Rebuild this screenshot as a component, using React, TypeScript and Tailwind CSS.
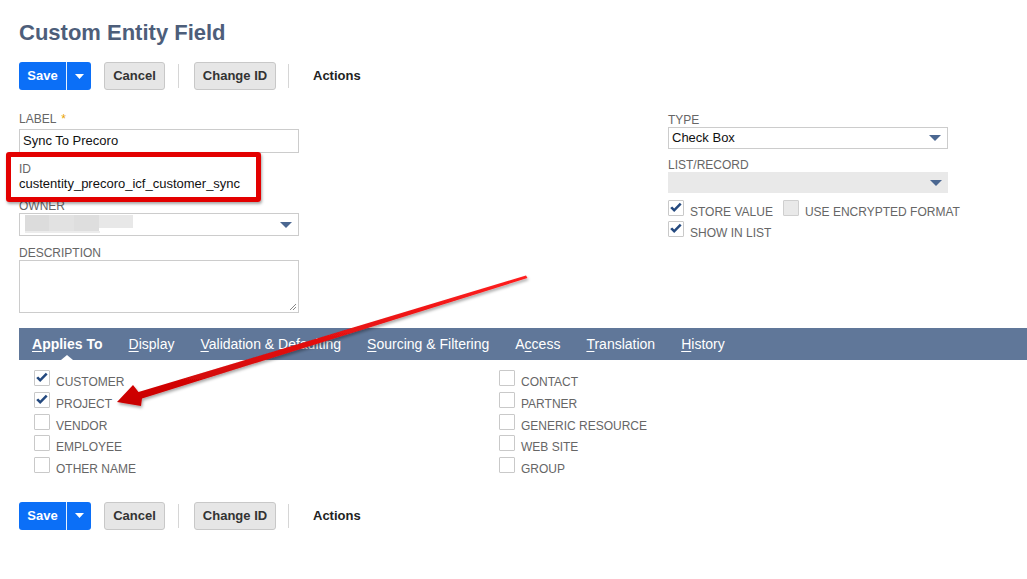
import React from "react";

const FONT = { fontFamily: '"Liberation Sans", Arial, sans-serif' };

function Caret() {
  return (
    <svg width="12" height="7" viewBox="0 0 12 7" className="absolute right-[6px] top-1/2 -translate-y-1/2">
      <path d="M0 0.5 L12 0.5 L6 6.5 Z" fill="#4b6791" />
    </svg>
  );
}

function Box({ checked, disabled }: { checked?: boolean; disabled?: boolean }) {
  return (
    <div
      className={
        "relative w-[16px] h-[16px] shrink-0 border rounded-[1px] " +
        (disabled ? "border-[#cfcfcf] bg-[#e9e9e9]" : "border-[#c9c9c9] bg-white")
      }
    >
      {checked && (
        <svg viewBox="0 0 16 16" className="absolute left-[-1px] top-[-1px] w-[16px] h-[16px]">
          <path d="M2.2 8 L4.2 6.4 L6.2 8.6 L11.8 2.8 L13.6 4.5 L6.2 12 Z" fill="#24497f" />
        </svg>
      )}
    </div>
  );
}

function CheckRow({ label, checked, h = "h-[21.75px]" }: { label: string; checked?: boolean; h?: string }) {
  return (
    <div className={"flex items-start " + h}>
      <Box checked={checked} />
      <span className="ml-[6px] mt-[5px] text-[12px] leading-[14px] text-[#666]">{label}</span>
    </div>
  );
}

function Buttons() {
  return (
    <div className="flex items-center h-[28px] ml-[19px]">
      <div className="flex h-[28px] rounded-[3px] bg-[#0b6ff7] overflow-hidden">
        <div className="w-[47px] flex items-center justify-center text-white font-bold text-[13px]">Save</div>
        <div className="w-[1px] bg-white/90" />
        <div className="w-[24px] flex items-center justify-center">
          <svg width="9" height="5" viewBox="0 0 9 5">
            <path d="M0 0 L9 0 L4.5 5 Z" fill="#fff" />
          </svg>
        </div>
      </div>
      <div className="ml-[13px] w-[61px] h-[28px] flex items-center justify-center rounded-[3px] border border-[#c8c8c8] bg-[#e6e6e6] text-[13px] font-bold text-[#333]">
        Cancel
      </div>
      <div className="ml-[13px] w-[1px] h-[24px] bg-[#d6d6d6]" />
      <div className="ml-[15px] w-[82px] h-[28px] flex items-center justify-center rounded-[3px] border border-[#c8c8c8] bg-[#e6e6e6] text-[13px] font-bold text-[#333]">
        Change ID
      </div>
      <div className="ml-[12px] w-[1px] h-[24px] bg-[#d6d6d6]" />
      <div className="ml-[24px] text-[13px] font-bold text-[#222]">Actions</div>
    </div>
  );
}

function Tab({ first, rest, pre = "", bold, active }: { first: string; rest: string; pre?: string; bold?: boolean; active?: boolean }) {
  return (
    <div className={"relative px-[13px] h-[32px] leading-[32px] text-[14px] text-white " + (bold ? "font-bold" : "")}>
      {pre}
      <span className="underline underline-offset-2">{first}</span>
      {rest}
      {active && (
        <div className="absolute left-1/2 -translate-x-1/2 bottom-0 w-0 h-0 border-l-[6px] border-r-[6px] border-b-[5px] border-l-transparent border-r-transparent border-b-white" />
      )}
    </div>
  );
}

export default function App() {
  return (
    <div className="relative w-[1027px] h-[579px] overflow-hidden bg-white" style={FONT}>
      <div className="pt-[20px] pl-[19px]">
        <h1 className="text-[22px] leading-[26px] font-bold text-[#4d5e7a]">Custom Entity Field</h1>
      </div>
      <div className="mt-[16px]">
        <Buttons />
      </div>

      {/* form */}
      <div className="mt-[22px] ml-[19px] flex">
        <div className="w-[649px]">
          <div className="w-[280px]">
            <div className="text-[12px] leading-[14px] text-[#666] h-[14px]">
              LABEL <span className="ml-[2px] text-[#e8a300]">*</span>
            </div>
            <div className="mt-[3px] h-[24px] border border-[#cccccc] flex items-center px-[3px] text-[13px] text-[#111]">
              Sync To Precoro
            </div>
            <div className="mt-[9px] text-[12px] leading-[14px] text-[#666]">ID</div>
            <div className="text-[13px] leading-[16px] text-[#111]">custentity_precoro_icf_customer_sync</div>
            <div className="mt-[7px] text-[12px] leading-[14px] text-[#666]">OWNER</div>
            <div className="relative h-[23px] border border-[#cccccc]">
              <div className="absolute left-[5px] top-[1px] flex">
                <div className="w-[24px] h-[17px] bg-[#dcdcdc]" />
                <div className="w-[25px] h-[17px] bg-[#e2e2e2]" />
                <div className="w-[25px] h-[17px] bg-[#dedede]" />
                <div className="w-[34px] h-[13px] bg-[#e8e8e8]" />
              </div>
              <div className="absolute left-[5px] top-[17px] w-[75px] h-[2px] bg-[#ececec]" />
              <Caret />
            </div>
            <div className="mt-[10px] text-[12px] leading-[14px] text-[#666]">DESCRIPTION</div>
            <div className="relative h-[53px] border border-[#cccccc]">
              <svg width="8" height="8" viewBox="0 0 8 8" className="absolute right-[1px] bottom-[1px]">
                <path d="M7 1 L1 7 M7 4 L4 7" stroke="#888" strokeWidth="1" />
              </svg>
            </div>
          </div>
        </div>
        <div className="w-[280px] pt-[2px]">
          <div className="text-[12px] leading-[13px] h-[13px] text-[#666]">TYPE</div>
          <div className="relative h-[22px] border border-[#cccccc] flex items-center px-[3px] text-[13px] text-[#111]">
            Check Box
            <Caret />
          </div>
          <div className="mt-[10px] text-[12px] leading-[13px] h-[13px] text-[#666]">LIST/RECORD</div>
          <div className="relative h-[21px] bg-[#e9e9e9]">
            <Caret />
          </div>
          <div className="mt-[7px] flex items-start h-[21px] whitespace-nowrap">
            <Box checked />
            <span className="ml-[6px] mt-[5px] text-[12px] leading-[14px] text-[#666]">STORE VALUE</span>
            <div className="ml-[10px]">
              <Box disabled />
            </div>
            <span className="ml-[6px] mt-[5px] text-[12px] leading-[14px] text-[#666]">USE ENCRYPTED FORMAT</span>
          </div>
          <CheckRow label="SHOW IN LIST" checked h="h-[21px]" />
        </div>
      </div>

      {/* tabs */}
      <div className="mt-[15px] ml-[19px] h-[32px] bg-[#607799] flex">
        <Tab first="A" rest="pplies To" bold active />
        <Tab first="D" rest="isplay" />
        <Tab first="V" rest="alidation & Defaulting" />
        <Tab first="S" rest="ourcing & Filtering" />
        <Tab pre="A" first="c" rest="cess" />
        <Tab first="T" rest="ranslation" />
        <Tab first="H" rest="istory" />
      </div>

      <div className="mt-[10px] ml-[34px] flex">
        <div className="w-[465px]">
          <CheckRow label="CUSTOMER" checked />
          <CheckRow label="PROJECT" checked />
          <CheckRow label="VENDOR" />
          <CheckRow label="EMPLOYEE" />
          <CheckRow label="OTHER NAME" />
        </div>
        <div>
          <CheckRow label="CONTACT" />
          <CheckRow label="PARTNER" />
          <CheckRow label="GENERIC RESOURCE" />
          <CheckRow label="WEB SITE" />
          <CheckRow label="GROUP" />
        </div>
      </div>

      <div className="mt-[23px]">
        <Buttons />
      </div>

      {/* red highlight box */}
      <div className="absolute left-[6px] top-[152px] w-[255px] h-[50px] border-[5px] border-[#e30000] rounded-[3px] shadow-[1px_2px_3px_rgba(0,0,0,0.35)] pointer-events-none" />

      {/* red arrow */}
      <svg className="absolute left-0 top-0 pointer-events-none" width="1027" height="579" viewBox="0 0 1027 579">
        <defs>
          <linearGradient id="ag" x1="0" y1="0" x2="0" y2="1">
            <stop offset="0" stopColor="#ff2020" />
            <stop offset="1" stopColor="#c80000" />
          </linearGradient>
          <filter id="sh" x="-10%" y="-10%" width="120%" height="130%">
            <feDropShadow dx="1" dy="2" stdDeviation="1.5" floodColor="#000" floodOpacity="0.35" />
          </filter>
        </defs>
        <polygon
          points="117,402 133,385 138.5,392 526,275.5 527.5,278 142,398.5 141,406"
          fill="url(#ag)"
          filter="url(#sh)"
        />
      </svg>
    </div>
  );
}
